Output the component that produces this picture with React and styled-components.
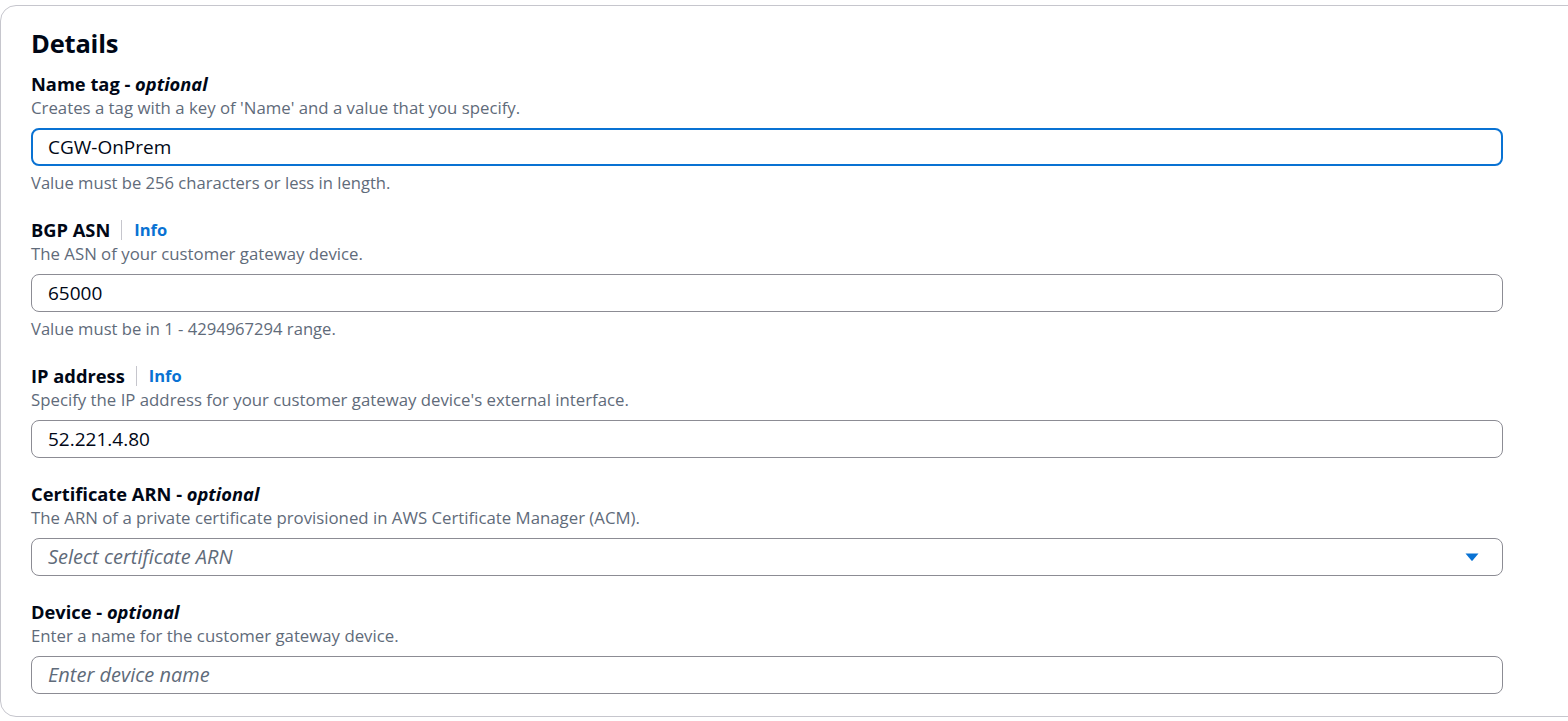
import styled, { createGlobalStyle } from "styled-components";

const GlobalStyle = createGlobalStyle`
  html, body {
    margin: 0;
    padding: 0;
    background: #ffffff;
    overflow: hidden;
  }
  body {
    font-family: "Open Sans", "Noto Sans", Arial, sans-serif;
    color: #000716;
  }
`;

const fields = [
  {
    label: "Name tag",
    optional: true,
    description: "Creates a tag with a key of 'Name' and a value that you specify.",
    value: "CGW-OnPrem",
    focused: true,
    constraint: "Value must be 256 characters or less in length.",
  },
  {
    label: "BGP ASN",
    info: true,
    description: "The ASN of your customer gateway device.",
    value: "65000",
    constraint: "Value must be in 1 - 4294967294 range.",
  },
  {
    label: "IP address",
    info: true,
    description:
      "Specify the IP address for your customer gateway device's external interface.",
    value: "52.221.4.80",
  },
  {
    label: "Certificate ARN",
    optional: true,
    description:
      "The ARN of a private certificate provisioned in AWS Certificate Manager (ACM).",
    placeholder: "Select certificate ARN",
    select: true,
  },
  {
    label: "Device",
    optional: true,
    description: "Enter a name for the customer gateway device.",
    placeholder: "Enter device name",
  },
];

function App() {
  return (
    <>
      <GlobalStyle />
      <Page>
        <Card>
          <Heading>Details</Heading>
          <Fields>
            {fields.map((f) => (
              <Field key={f.label}>
                <LabelRow>
                  <Label>
                    {f.label}
                    {f.optional && (
                      <>
                        {" - "}
                        <Optional>optional</Optional>
                      </>
                    )}
                  </Label>
                  {f.info && (
                    <>
                      <Divider />
                      <InfoLink>Info</InfoLink>
                    </>
                  )}
                </LabelRow>
                <Description>{f.description}</Description>
                <InputBox $focused={f.focused}>
                  {f.value ? (
                    <Value>{f.value}</Value>
                  ) : (
                    <Placeholder>{f.placeholder}</Placeholder>
                  )}
                  {f.select && (
                    <Caret width="16" height="16" viewBox="0 0 16 16">
                      <path
                        d="M1.5 4.5h13L8.6 11.6a0.8 0.8 0 0 1-1.2 0z"
                        fill="#0972d3"
                      />
                    </Caret>
                  )}
                </InputBox>
                {f.constraint && <Constraint>{f.constraint}</Constraint>}
              </Field>
            ))}
          </Fields>
        </Card>
      </Page>
    </>
  );
}

export default App;

const Page = styled.div`
  width: 1568px;
  height: 721px;
  padding-top: 5px;
  box-sizing: border-box;
`;

const Card = styled.div`
  width: 1600px;
  border: 1px solid #c6c6cd;
  border-radius: 16px;
  background: #ffffff;
  box-sizing: border-box;
  padding: 20px 30px 22px 30px;
`;

const Heading = styled.h2`
  margin: 0 0 13px 0;
  font-size: 25.5px;
  line-height: 34px;
  font-weight: 700;
  letter-spacing: -0.2px;
`;

const Fields = styled.div`
  display: flex;
  flex-direction: column;
  gap: 25px;
  width: 1472px;
`;

const Field = styled.div`
  display: flex;
  flex-direction: column;
`;

const LabelRow = styled.div`
  display: flex;
  align-items: center;
  height: 22px;
`;

const Label = styled.span`
  font-size: 18.3px;
  line-height: 22px;
  font-weight: 700;
`;

const Optional = styled.i`
  font-style: italic;
`;

const Divider = styled.span`
  width: 1px;
  height: 20px;
  background: #c6c6cd;
  margin: 0 12px 0 11px;
`;

const InfoLink = styled.a`
  font-size: 16.5px;
  font-weight: 700;
  color: #0972d3;
  line-height: 22px;
`;

const Description = styled.div`
  margin-top: 2px;
  font-size: 16.8px;
  line-height: 22px;
  color: #5f6b7a;
`;

const InputBox = styled.div`
  margin-top: 9px;
  height: 38px;
  box-sizing: border-box;
  display: flex;
  align-items: center;
  justify-content: space-between;
  padding: 0 ${(p) => (p.$focused ? "15px" : "16px")};
  border: ${(p) => (p.$focused ? "2px solid #0972d3" : "1px solid #8c8c94")};
  border-radius: 8px;
  background: #ffffff;
`;

const Value = styled.span`
  font-size: 19px;
  line-height: 22px;
  color: #000716;
`;

const Placeholder = styled.span`
  font-size: 20px;
  line-height: 22px;
  font-style: italic;
  color: #5f6b7a;
`;

const Caret = styled.svg`
  margin-right: 6px;
  flex-shrink: 0;
`;

const Constraint = styled.div`
  margin-top: 6px;
  font-size: 16.6px;
  line-height: 22px;
  color: #5f6b7a;
`;
